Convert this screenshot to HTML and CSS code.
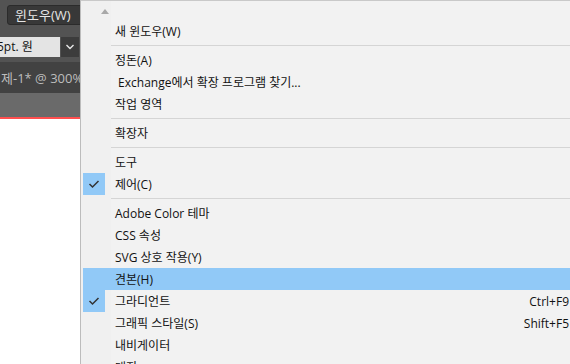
FILE: index.html
```html
<!DOCTYPE html>
<html lang="ko">
<head>
  <meta charset="UTF-8">
  <title>윈도우 메뉴</title>
  <link rel="stylesheet" href="styles.css">
</head>
<body>
  <div class="app">
    <div class="topbar">
      <button class="menu-btn">윈도우(W)</button>
    </div>
    <div class="controlbar">
      <div class="field">5pt. 원</div>
      <div class="drop">
        <svg width="10" height="6" viewBox="0 0 10 6"><path d="M1.5 1 L5 4.5 L8.5 1" fill="none" stroke="#e8e8e8" stroke-width="1.4"/></svg>
      </div>
    </div>
    <div class="tabbar">제-1* @ 300%</div>
    <div class="ruler"></div>
    <div class="canvas"></div>
  </div>

  <div class="menu">
    <div class="scroll-up"><span class="tri"></span></div>

    <div class="item"><span class="check"></span><span class="label">새 윈도우(W)</span></div>
    <div class="sep"></div>
    <div class="item"><span class="check"></span><span class="label">정돈(A)</span></div>
    <div class="item"><span class="check"></span><span class="label">&nbsp;Exchange에서 확장 프로그램 찾기...</span></div>
    <div class="item"><span class="check"></span><span class="label">작업 영역</span></div>
    <div class="sep"></div>
    <div class="item"><span class="check"></span><span class="label">확장자</span></div>
    <div class="sep"></div>
    <div class="item"><span class="check"></span><span class="label">도구</span></div>
    <div class="item"><span class="check on"><svg width="12" height="10" viewBox="0 0 12 10"><path d="M1.5 5 L4.5 8 L10.5 2" fill="none" stroke="#333" stroke-width="1.5"/></svg></span><span class="label">제어(C)</span></div>
    <div class="sep"></div>
    <div class="item"><span class="check"></span><span class="label">Adobe Color 테마</span></div>
    <div class="item"><span class="check"></span><span class="label">CSS 속성</span></div>
    <div class="item"><span class="check"></span><span class="label">SVG 상호 작용(Y)</span></div>
    <div class="item hover"><span class="check"></span><span class="label">견본(H)</span></div>
    <div class="item"><span class="check on"><svg width="12" height="10" viewBox="0 0 12 10"><path d="M1.5 5 L4.5 8 L10.5 2" fill="none" stroke="#333" stroke-width="1.5"/></svg></span><span class="label">그라디언트</span><span class="key">Ctrl+F9</span></div>
    <div class="item"><span class="check"></span><span class="label">그래픽 스타일(S)</span><span class="key">Shift+F5</span></div>
    <div class="item"><span class="check"></span><span class="label">내비게이터</span></div>
    <div class="item"><span class="check"></span><span class="label">대지</span></div>
  </div>
</body>
</html>
```

FILE: styles.css
```css
html, body {
  margin: 0;
  padding: 0;
  height: 100%;
  overflow: hidden;
}
body {
  display: flex;
  font-family: "Open Sans", "Noto Sans CJK KR", sans-serif;
  font-size: 12px;
  background: #f2f2f2;
}

/* app behind the menu */
.app {
  width: 80px;
  flex-shrink: 0;
  display: flex;
  flex-direction: column;
  background: #535353;
  overflow: hidden;
}
.topbar {
  height: 31px;
  padding: 5px 0 0 7px;
  box-sizing: border-box;
}
.menu-btn {
  display: block;
  width: 80px;
  height: 20px;
  padding: 0 0 0 7px;
  text-align: left;
  background: #383838;
  border: 1px solid #2b2b2b;
  border-radius: 3px;
  color: #e6e6e6;
  font-family: "Open Sans", "Noto Sans CJK KR", sans-serif;
  font-size: 13px;
  line-height: 18px;
}
.controlbar {
  height: 31px;
  display: flex;
  align-items: flex-start;
  padding-top: 6px;
  box-sizing: border-box;
}
.field {
  width: 60px;
  height: 20px;
  background: #e4e4e4;
  color: #111;
  line-height: 20px;
  text-indent: -3px;
  white-space: nowrap;
  overflow: hidden;
}
.drop {
  width: 18px;
  height: 20px;
  margin-left: 1px;
  background: #3c3c3c;
  display: flex;
  align-items: center;
  justify-content: center;
}
.tabbar {
  height: 31px;
  background: #424242;
  color: #bdbdbd;
  font-size: 13px;
  line-height: 33px;
  white-space: nowrap;
  text-indent: 1px;
}
.ruler {
  height: 24px;
  background: #6a6a6a;
  border-bottom: 2px solid #ff4f4f;
}
.canvas {
  flex: 1;
  background: #fff;
}

/* the window menu */
.menu {
  flex: 1;
  border-top: 1px solid #c9c9c9;
  border-left: 1px solid #bcbcbc;
  background: linear-gradient(to right, #f0f0f0 30px, #f2f2f2 30px);
  color: #111;
}
.scroll-up {
  height: 19px;
  padding: 8px 0 0 20px;
  box-sizing: border-box;
}
.tri {
  display: block;
  width: 0;
  height: 0;
  border-left: 4.5px solid transparent;
  border-right: 4.5px solid transparent;
  border-bottom: 5px solid #a8a8a8;
}
.item {
  height: 22px;
  margin-left: 2px;
  display: flex;
  align-items: center;
  white-space: nowrap;
}
.item.hover {
  background: #91c9f7;
}
.check {
  width: 22px;
  height: 22px;
  flex-shrink: 0;
  display: flex;
  align-items: center;
  justify-content: center;
}
.check.on {
  background: #91c9f7;
}
.label {
  padding-left: 10px;
}
.key {
  margin-left: auto;
  padding-right: 1px;
}
.sep {
  height: 7px;
  margin-left: 30px;
  padding-top: 3px;
  box-sizing: border-box;
}
.sep::after {
  content: "";
  display: block;
  height: 1px;
  background: #d5d5d5;
}
```
